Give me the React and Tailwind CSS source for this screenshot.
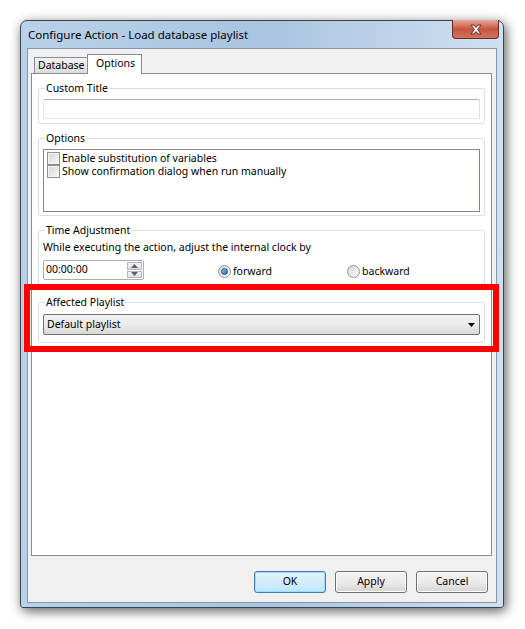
import React from 'react';

const font = { fontFamily: '"Noto Sans", "DejaVu Sans", sans-serif' };

function GroupBox({ title, className = '', children }) {
  return (
    <fieldset className={`border border-[#d5dfe5] rounded-[3px] px-[4px] ${className}`}>
      <legend className="ml-[2px] px-[1px] text-[10.5px] leading-[13px] text-black">{title}</legend>
      {children}
    </fieldset>
  );
}

function Checkbox({ label }) {
  return (
    <div className="flex items-center gap-[2px] h-[13px]">
      <span className="shrink-0 w-[13px] h-[13px] border border-[#8f8f8f] bg-gradient-to-br from-[#d6d6d6] to-[#f8f8f8] shadow-[inset_0_0_0_1px_#f4f4f4]" />
      <span className="text-[10.5px] leading-[13px] whitespace-nowrap">{label}</span>
    </div>
  );
}

function Radio({ label, checked }) {
  return (
    <div className="flex items-center gap-[2px]">
      <span className="shrink-0 w-[13px] h-[13px] rounded-full border border-[#8e8f8f] bg-gradient-to-br from-[#d8d8d8] to-[#fafafa] flex items-center justify-center">
        {checked && <span className="w-[7px] h-[7px] rounded-full bg-gradient-to-br from-[#9cd0f5] to-[#1a5fa8] border border-[#1d4f82]" />}
      </span>
      <span className="text-[10.5px] leading-[13px]">{label}</span>
    </div>
  );
}

function Button({ children, primary }) {
  return (
    <button
      className={`w-[72px] h-[22px] rounded-[3px] text-[10.5px] text-black border ${
        primary
          ? 'border-[#3c7fb1] bg-gradient-to-b from-[#e5f4fc] via-[#d4ecf9] to-[#bee6fd] shadow-[inset_0_0_0_1px_#9fdcfb]'
          : 'border-[#707070] bg-gradient-to-b from-[#f2f2f2] via-[#ebebeb] to-[#d5d5d5] shadow-[inset_0_0_0_1px_#fcfcfc]'
      }`}
    >
      {children}
    </button>
  );
}

export default function App() {
  return (
    <div className="w-[525px] h-[629px] bg-white pt-[20px] pl-[20px]" style={font}>
      <div className="w-[484px] h-[588px] rounded-t-[7px] rounded-b-[3px] border border-[#3b4250] bg-gradient-to-r from-[#b9d1ea] via-[#a9c4e0] to-[#cfe0f2] shadow-[2px_3px_12px_rgba(0,0,0,0.65)] flex flex-col px-[6px] pb-[4px]">
        {/* title bar */}
        <div className="h-[27px] flex items-start relative">
          <span className="mt-[7px] ml-[1px] text-[11.5px] leading-[14px] text-black">Configure Action - Load database playlist</span>
          <div className="absolute right-[-2px] top-[-1px] w-[47px] h-[19px] rounded-b-[4px] border border-[#6d2a24] border-t-0 bg-gradient-to-b from-[#e9a99b] via-[#c7533f] to-[#d0745f] flex items-center justify-center">
            <svg width="14" height="11" viewBox="0 0 14 11">
              <path d="M2 1 L5 1 L7 3.5 L9 1 L12 1 L8.6 5.5 L12 10 L9 10 L7 7.5 L5 10 L2 10 L5.4 5.5 Z" fill="#fff" stroke="#5a2a28" strokeWidth="1" strokeLinejoin="round" />
            </svg>
          </div>
        </div>

        {/* client */}
        <div className="flex-1 bg-[#f0f0f0] border border-[#8699ab] flex flex-col pl-[3px] pr-[4px] pt-[4px]">
          {/* tabs */}
          <div className="flex items-end h-[20px] relative z-10">
            <div className="ml-[3px] w-[54px] h-[16px] border border-[#898c95] border-b-0 bg-gradient-to-b from-[#f2f2f2] to-[#dcdcdc] text-[10.5px] leading-[14px] px-[3px]">
              Database
            </div>
            <div className="w-[55px] h-[20px] border border-[#898c95] border-b-0 bg-white text-[10.5px] leading-[16px] px-[8px] -mb-[1px] -ml-[1px]">
              Options
            </div>
          </div>

          <div className="h-[483px] bg-white border border-[#898c95] px-[6px] pt-[8px]">
            <GroupBox title="Custom Title" className="h-[42px] pt-[4px]">
              <div className="h-[20px] border border-[#abadb3] border-l-[#e2e3ea] border-r-[#dbdfe6] border-b-[#e3e9ef] rounded-[2px]" />
            </GroupBox>

            <GroupBox title="Options" className="h-[84px] mt-[8px] pt-[4px]">
              <div className="h-[63px] border border-[#828790] pl-[3px] pt-[2px] flex flex-col">
                <Checkbox label="Enable substitution of variables" />
                <Checkbox label="Show confirmation dialog when run manually" />
              </div>
            </GroupBox>

            <GroupBox title="Time Adjustment" className="h-[65px] mt-[8px] pt-[4px]">
              <div className="text-[10.5px] leading-[13px]">While executing the action, adjust the internal clock by</div>
              <div className="flex items-center mt-[6px]">
                <div className="shrink-0 w-[101px] h-[20px] border border-[#abadb3] rounded-[2px] flex items-center pl-[2px] relative">
                  <span className="text-[10.5px]">00:00:00</span>
                  <div className="absolute right-[1px] top-[1px] w-[15px] h-[16px] flex flex-col gap-[1px]">
                    <div className="h-[8px] border border-[#b5b5b5] bg-gradient-to-b from-[#f6f6f6] to-[#dedede] flex items-center justify-center">
                      <svg width="7" height="4" viewBox="0 0 7 4"><path d="M0 4 L3.5 0 L7 4 Z" fill="#4d6185" /></svg>
                    </div>
                    <div className="h-[8px] border border-[#b5b5b5] bg-gradient-to-b from-[#f6f6f6] to-[#dedede] flex items-center justify-center">
                      <svg width="7" height="4" viewBox="0 0 7 4"><path d="M0 0 L3.5 4 L7 0 Z" fill="#4d6185" /></svg>
                    </div>
                  </div>
                </div>
                <div className="ml-[74px] mt-[2px]"><Radio label="forward" checked /></div>
                <div className="ml-[75px] mt-[2px]"><Radio label="backward" /></div>
              </div>
            </GroupBox>

            {/* highlighted */}
            <div className="relative z-10 mx-[-14px] -mt-[5px] border-[6px] border-[#ff0000] h-[68px] px-[8px] pt-[6px]">
              <GroupBox title="Affected Playlist" className="h-[47px] pt-[5px]">
                <div className="h-[21px] border border-[#707070] rounded-[2px] bg-gradient-to-b from-[#f2f2f2] via-[#ebebeb] to-[#d8d8d8] flex items-center justify-between px-[3px]">
                  <span className="text-[10.5px] leading-[13px]">Default playlist</span>
                  <svg width="7" height="4" viewBox="0 0 7 4" className="mr-[1px]"><path d="M0 0 L7 0 L3.5 4 Z" fill="#000" /></svg>
                </div>
              </GroupBox>
            </div>
          </div>

          {/* buttons */}
          <div className="flex justify-end gap-[9px] mt-[15px] mr-[4px]">
            <Button primary>OK</Button>
            <Button>Apply</Button>
            <Button>Cancel</Button>
          </div>
        </div>
      </div>
    </div>
  );
}
